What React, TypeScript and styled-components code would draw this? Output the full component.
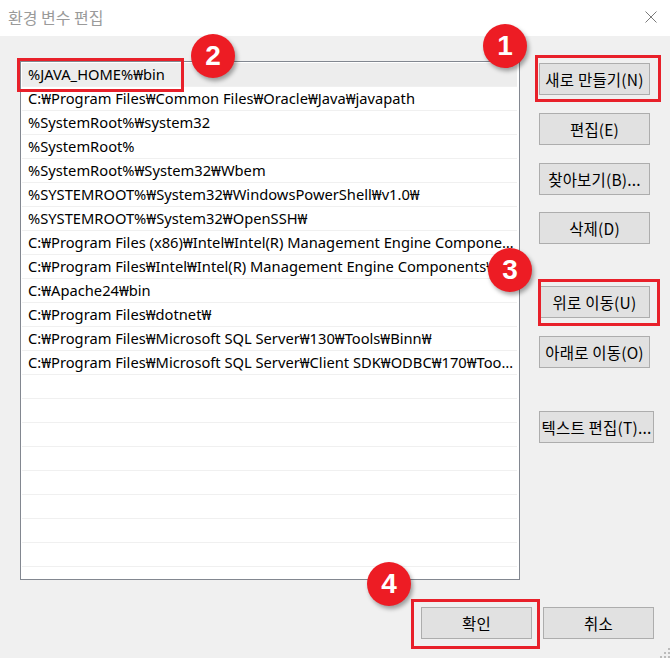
import React from "react";
import styled, { createGlobalStyle } from "styled-components";

const GlobalStyle = createGlobalStyle`
  html, body { margin: 0; padding: 0; background: #f0f0f0; }
  body { font-family: "Noto Sans", "Noto Sans CJK KR", sans-serif; }
  * { box-sizing: border-box; }
`;

const Window = styled.div`
  width: 670px;
  height: 658px;
  display: flex;
  flex-direction: column;
  position: relative;
  overflow: hidden;
  background: #f0f0f0;
`;

const TitleBar = styled.div`
  height: 36px;
  background: #ffffff;
  display: flex;
  align-items: center;
  justify-content: space-between;
  padding: 0 13px 2px 8px;
`;

const Title = styled.span`
  font-family: "Noto Sans CJK KR", sans-serif;
  font-size: 16px;
  color: #9a9a9a;
`;

const Body = styled.div`
  flex: 1;
  display: flex;
  flex-direction: column;
  padding: 25px 16px 0 20px;
`;

const Main = styled.div`
  display: flex;
  gap: 19px;
`;

const List = styled.div`
  width: 504px;
  height: 519px;
  border: 1px solid #828790;
  background: #ffffff;
  padding: 1px 2px 0 1px;
  overflow: hidden;
  display: flex;
  flex-direction: column;
`;

const Row = styled.div<{ $selected?: boolean }>`
  flex: none;
  height: 24px;
  line-height: 23px;
  border-bottom: 1px solid #f0f0f0;
  background: ${(p) => (p.$selected ? "#ededed" : "#ffffff")};
  padding: 0 2px 0 6px;
  font-size: 14.7px;
  color: #000000;
  white-space: nowrap;
  overflow: hidden;
  text-overflow: ellipsis;
`;

const Side = styled.div`
  display: flex;
  flex-direction: column;
  align-items: flex-start;
  padding-top: 2px;
`;

const Button = styled.button<{ $gap?: number; $wide?: boolean }>`
  width: ${(p) => (p.$wide ? "115px" : "111px")};
  height: 32px;
  margin-top: ${(p) => p.$gap ?? 0}px;
  background: #e1e1e1;
  border: 1px solid #adadad;
  border-radius: 0;
  padding: 0;
  font-family: "Noto Sans CJK KR", "Noto Sans", sans-serif;
  font-size: 15.5px;
  letter-spacing: 0.2px;
  color: #000000;
  white-space: nowrap;
  overflow: hidden;
  cursor: default;
`;

const Footer = styled.div`
  display: flex;
  justify-content: flex-end;
  gap: 11px;
  padding-top: 27px;
`;

const Mark = styled.div<{ $x: number; $y: number; $w: number; $h: number }>`
  position: absolute;
  left: ${(p) => p.$x}px;
  top: ${(p) => p.$y}px;
  width: ${(p) => p.$w}px;
  height: ${(p) => p.$h}px;
  border: 3px solid #e8202a;
  pointer-events: none;
`;

const Badge = styled.div<{ $x: number; $y: number }>`
  position: absolute;
  left: ${(p) => p.$x - 22}px;
  top: ${(p) => p.$y - 22}px;
  width: 44px;
  height: 44px;
  border-radius: 50%;
  background: #ed1c24;
  box-shadow: 2px 3px 4px rgba(0, 0, 0, 0.35);
  color: #ffffff;
  font-family: "Liberation Sans", Arial, sans-serif;
  font-weight: 700;
  font-size: 28px;
  display: flex;
  align-items: center;
  justify-content: center;
`;

const Grip = styled.svg`
  position: absolute;
  right: 0;
  bottom: 0;
`;

const rows = [
  "%JAVA_HOME%₩bin",
  "C:₩Program Files₩Common Files₩Oracle₩Java₩javapath",
  "%SystemRoot%₩system32",
  "%SystemRoot%",
  "%SystemRoot%₩System32₩Wbem",
  "%SYSTEMROOT%₩System32₩WindowsPowerShell₩v1.0₩",
  "%SYSTEMROOT%₩System32₩OpenSSH₩",
  "C:₩Program Files (x86)₩Intel₩Intel(R) Management Engine Components₩DAL",
  "C:₩Program Files₩Intel₩Intel(R) Management Engine Components₩DAL",
  "C:₩Apache24₩bin",
  "C:₩Program Files₩dotnet₩",
  "C:₩Program Files₩Microsoft SQL Server₩130₩Tools₩Binn₩",
  "C:₩Program Files₩Microsoft SQL Server₩Client SDK₩ODBC₩170₩Tools₩Binn₩",
];

export default function App() {
  const all = [...rows, ...Array(10).fill("")];
  return (
    <Window>
      <GlobalStyle />
      <TitleBar>
        <Title>환경 변수 편집</Title>
        <svg width="12" height="12" viewBox="0 0 12 12">
          <path d="M0.5 0.5 L11.5 11.5 M11.5 0.5 L0.5 11.5" stroke="#7a7a7a" strokeWidth="1" />
        </svg>
      </TitleBar>
      <Body>
        <Main>
          <List>
            {all.map((t, i) => (
              <Row key={i} $selected={i === 0}>
                {t}
              </Row>
            ))}
          </List>
          <Side>
            <Button>새로 만들기(N)</Button>
            <Button $gap={18}>편집(E)</Button>
            <Button $gap={18}>찾아보기(B)...</Button>
            <Button $gap={17}>삭제(D)</Button>
            <Button $gap={42}>위로 이동(U)</Button>
            <Button $gap={18}>아래로 이동(O)</Button>
            <Button $gap={43} $wide>
              텍스트 편집(T)...
            </Button>
          </Side>
        </Main>
        <Footer>
          <Button>확인</Button>
          <Button>취소</Button>
        </Footer>
      </Body>
      <Mark $x={17} $y={58} $w={167} $h={34} />
      <Mark $x={535} $y={55} $w={126} $h={47} />
      <Mark $x={538} $y={279} $w={122} $h={47} />
      <Mark $x={411} $y={599} $w={129} $h={50} />
      <Badge $x={213} $y={56}>2</Badge>
      <Badge $x={505} $y={46}>1</Badge>
      <Badge $x={510} $y={270}>3</Badge>
      <Badge $x={389} $y={584}>4</Badge>
      <Grip width="10" height="10" viewBox="0 0 10 10">
        <rect x="8" y="0" width="2" height="2" fill="#bcbcbc" />
        <rect x="4" y="4" width="2" height="2" fill="#bcbcbc" />
        <rect x="8" y="4" width="2" height="2" fill="#bcbcbc" />
        <rect x="0" y="8" width="2" height="2" fill="#bcbcbc" />
        <rect x="4" y="8" width="2" height="2" fill="#bcbcbc" />
        <rect x="8" y="8" width="2" height="2" fill="#bcbcbc" />
      </Grip>
    </Window>
  );
}
